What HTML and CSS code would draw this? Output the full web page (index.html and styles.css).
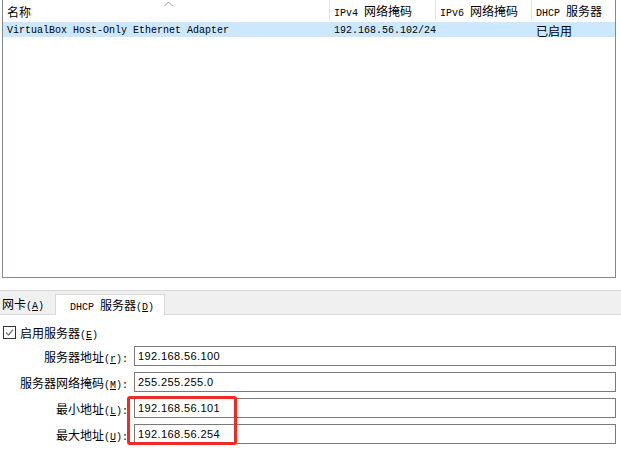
FILE: index.html
```html
<!DOCTYPE html>
<html>
<head>
<meta charset="utf-8">
<link rel="stylesheet" href="styles.css">
</head>
<body>
<div class="list">
  <svg class="sort" width="9" height="6" viewBox="0 0 9 6">
    <path d="M0.5 5 L4.5 1 L8.5 5" fill="none" stroke="#9a9a9a" stroke-width="1"/>
  </svg>
  <div class="head">
    <div class="hc c1"><span class="cn">名称</span></div>
    <div class="hc c2"><span>IPv4 <span class="cn">网络掩码</span></span></div>
    <div class="hc c3"><span>IPv6 <span class="cn">网络掩码</span></span></div>
    <div class="hc c4"><span>DHCP <span class="cn">服务器</span></span></div>
  </div>
  <div class="row sel">
    <div class="cell c1">VirtualBox Host-Only Ethernet Adapter</div>
    <div class="cell c2">192.168.56.102/24</div>
    <div class="cell c3"></div>
    <div class="cell c4"><span class="cn">已启用</span></div>
  </div>
</div>

<div class="tabs">
  <div class="tab"><span><span class="cn">网卡</span>(<u>A</u>)</span></div>
  <div class="tab active"><span>DHCP <span class="cn">服务器</span>(<u>D</u>)</span></div>
</div>

<div class="panel">
  <div class="check">
    <svg class="box" width="13" height="13" viewBox="0 0 13 13">
      <rect x="0.5" y="0.5" width="12" height="12" fill="#fff" stroke="#333"/>
      <path d="M3 6.5 L5.5 9 L10 3.8" fill="none" stroke="#777" stroke-width="1.3"/>
    </svg>
    <span><span class="cn">启用服务器</span>(<u>E</u>)</span>
  </div>
  <div class="form">
    <div class="lbl"><span><span class="cn">服务器地址</span>(<u>r</u>):</span></div>
    <div class="inp">192.168.56.100</div>
    <div class="lbl"><span><span class="cn">服务器网络掩码</span>(<u>M</u>):</span></div>
    <div class="inp">255.255.255.0</div>
    <div class="lbl"><span><span class="cn">最小地址</span>(<u>L</u>):</span></div>
    <div class="inp">192.168.56.101</div>
    <div class="lbl"><span><span class="cn">最大地址</span>(<u>U</u>):</span></div>
    <div class="inp">192.168.56.254</div>
    <div class="mark"></div>
  </div>
</div>
</body>
</html>
```

FILE: styles.css
```css
html, body {
  margin: 0;
  padding: 0;
  background: #fff;
}
body {
  width: 621px;
  height: 450px;
  overflow: hidden;
  font-family: "Liberation Mono", "Noto Sans CJK SC", monospace;
  font-size: 10px;
  color: #000;
}
.cn {
  font-family: "Noto Sans CJK SC", sans-serif;
  font-size: 12px;
}
u {
  text-decoration: underline;
  text-underline-offset: 1px;
}

/* list view */
.list {
  position: relative;
  margin-left: 2px;
  width: 612px;
  height: 277px;
  border: 1px solid #828790;
  border-top: none;
}
.sort {
  position: absolute;
  left: 161px;
  top: 1px;
}
.head, .row {
  display: grid;
  grid-template-columns: 327px 106px 96px 1fr;
}
.head {
  height: 21px;
}
.hc {
  display: flex;
  align-items: center;
  padding-left: 4px;
  border-right: 1px solid #e5e5e5;
  line-height: 12px;
  padding-top: 3px;
  white-space: pre;
}
.hc.c4 {
  border-right: none;
}
.row {
  height: 15px;
  margin-top: 1px;
}
.row.sel {
  background: #cce8ff;
}
.cell {
  display: flex;
  align-items: center;
  padding-left: 4px;
  white-space: nowrap;
}

/* tabs */
.tabs {
  display: flex;
  align-items: flex-end;
  margin-top: 12px;
  height: 23px;
  background: #f0f0f0;
  border-top: 1px solid #d9d9d9;
  border-bottom: 1px solid #d9d9d9;
}
.tab {
  height: 22px;
  display: flex;
  align-items: center;
  padding-left: 2px;
  width: 53px;
  white-space: pre;
}
.tab.active {
  background: #fff;
  height: 19px;
  width: 94px;
  padding-left: 14px;
  margin-bottom: -1px;
  border: 1px solid #d9d9d9;
  border-bottom: none;
  padding-bottom: 1px;
}

/* panel */
.panel {
  padding-top: 9px;
}
.check {
  display: flex;
  align-items: center;
  gap: 4px;
  padding-left: 3px;
  height: 16px;
}
.form {
  position: relative;
  display: grid;
  grid-template-columns: 134px 482px;
  row-gap: 6px;
  margin-top: 6px;
}
.lbl {
  display: flex;
  align-items: center;
  justify-content: flex-end;
  padding-right: 6px;
  height: 20px;
  white-space: nowrap;
}
.inp {
  box-sizing: border-box;
  height: 20px;
  border: 1px solid #7a7a7a;
  display: flex;
  align-items: center;
  padding-left: 3px;
  font-family: "Liberation Sans", sans-serif;
  font-size: 11px;
  letter-spacing: 0.4px;
}
.mark {
  position: absolute;
  left: 127px;
  top: 50px;
  width: 104px;
  height: 43px;
  border: 3px solid #ee2b24;
  border-radius: 3px;
}
```
